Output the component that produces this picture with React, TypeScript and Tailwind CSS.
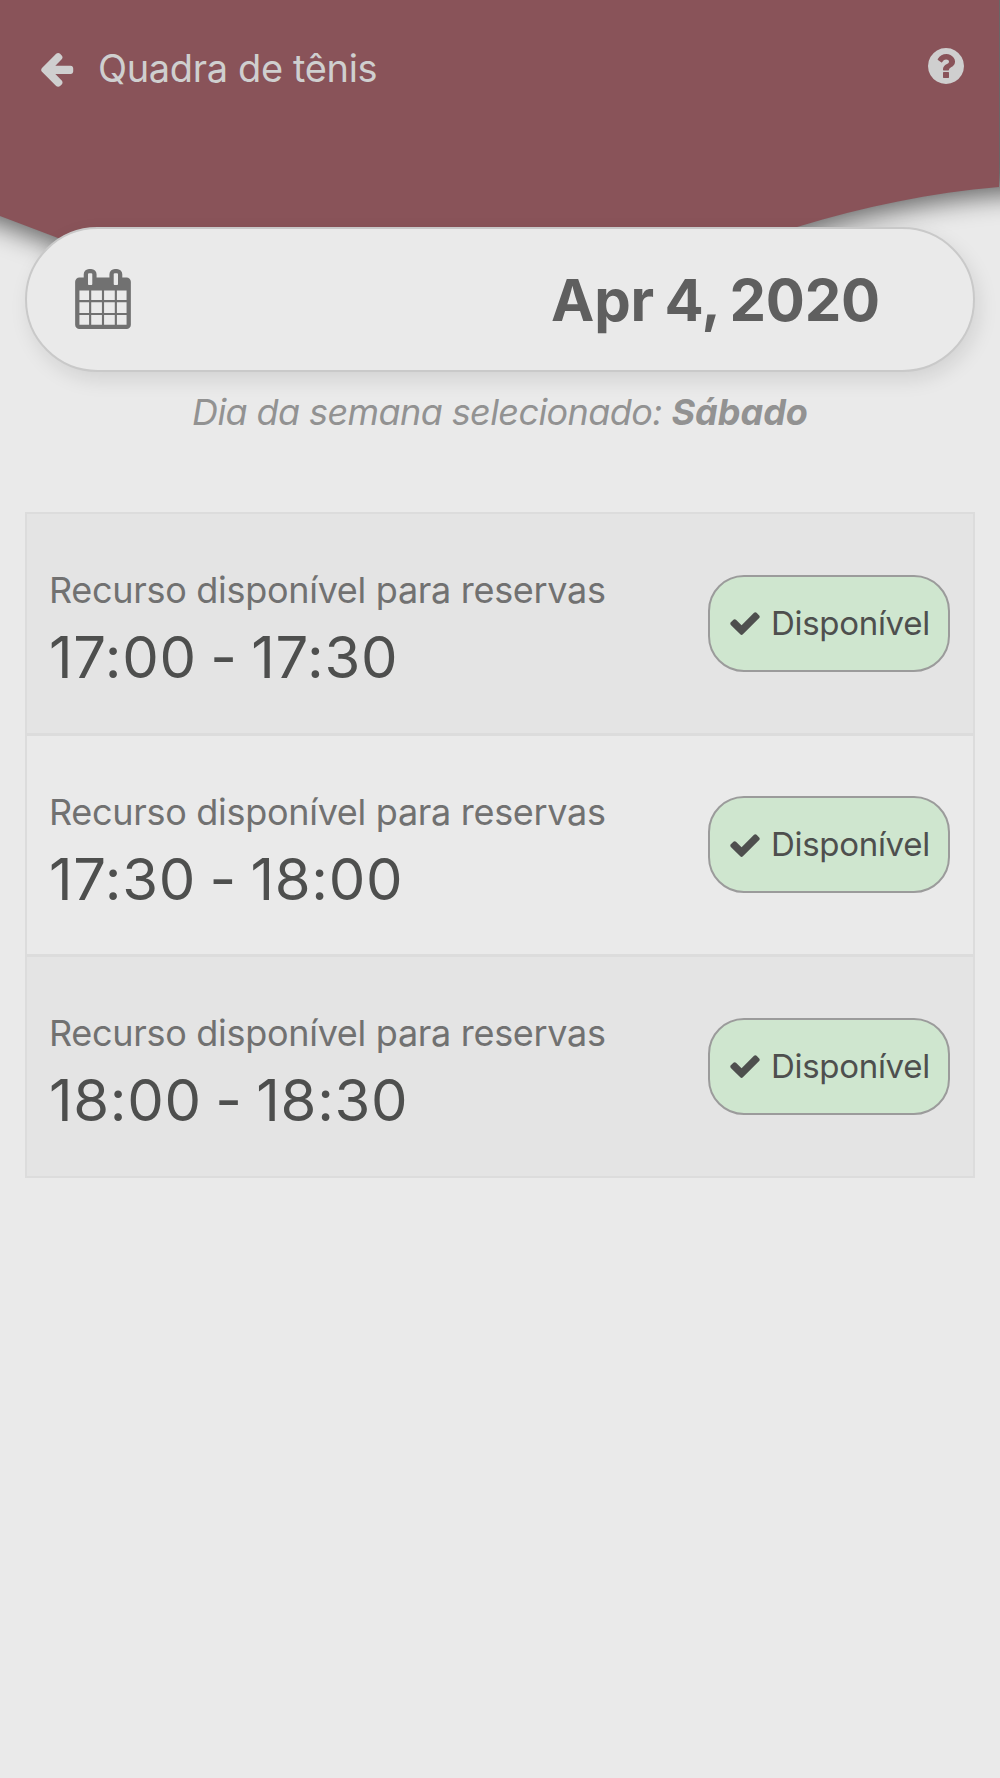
import React from "react";

const ARROW_LEFT =
  "M1664 896v128q0 53-32.5 90.5t-84.5 37.5h-704l293 294q38 36 38 90t-38 90l-75 76q-37 37-90 37-52 0-91-37l-651-652q-37-37-37-90 0-52 37-91l651-650q38-38 91-38 52 0 90 38l75 74q38 38 38 91t-38 91l-293 293h704q52 0 84.5 37.5t32.5 90.5z";
const QUESTION_CIRCLE =
  "M1024 1376v-192q0-14-9-23t-23-9h-192q-14 0-23 9t-9 23v192q0 14 9 23t23 9h192q14 0 23-9t9-23zm256-672q0-88-55.5-163t-138.5-116-170-41q-243 0-371 213-15 24 8 42l132 100q7 6 19 6 16 0 25-12 53-68 86-92 34-24 86-24 48 0 85.5 26t37.5 59q0 38-20 61t-68 45q-63 28-115.5 86.5t-52.5 125.5v36q0 14 9 23t23 9h192q14 0 23-9t9-23q0-19 21.5-49.5t54.5-49.5q32-18 49-28.5t46-35 44.5-48 28-60.5 12.5-81zm384 192q0 209-103 385.5t-279.5 279.5-385.5 103-385.5-103-279.5-279.5-103-385.5 103-385.5 279.5-279.5 385.5-103 385.5 103 279.5 279.5 103 385.5z";
const CALENDAR =
  "M192 1664h288v-288h-288v288zm352 0h320v-288h-320v288zm-352-352h288v-320h-288v320zm352 0h320v-320h-320v320zm-352-384h288v-288h-288v288zm736 736h320v-288h-320v288zm-384-736h320v-288h-320v288zm768 736h288v-288h-288v288zm-384-352h320v-320h-320v320zm-352-864v-288q0-13-9.5-22.5t-22.5-9.5h-64q-13 0-22.5 9.5t-9.5 22.5v288q0 13 9.5 22.5t22.5 9.5h64q13 0 22.5-9.5t9.5-22.5zm736 864h288v-320h-288v320zm-384-384h320v-288h-320v288zm384 0h288v-288h-288v288zm32-480v-288q0-13-9.5-22.5t-22.5-9.5h-64q-13 0-22.5 9.5t-9.5 22.5v288q0 13 9.5 22.5t22.5 9.5h64q13 0 22.5-9.5t9.5-22.5zm384-64v1280q0 52-38 90t-90 38h-1408q-52 0-90-38t-38-90v-1280q0-52 38-90t90-38h128v-96q0-66 47-113t113-47h64q66 0 113 47t47 113v96h384v-96q0-66 47-113t113-47h64q66 0 113 47t47 113v96h128q52 0 90 38t38 90z";
const CHECK =
  "M1671 566q0 40-28 68l-724 724-136 136q-28 28-68 28t-68-28l-136-136-362-362q-28-28-28-68t28-68l136-136q28-28 68-28t68 28l294 295 656-657q28-28 68-28t68 28l136 136q28 28 28 68z";

function Icon({ d, className }: { d: string; className: string }) {
  return (
    <svg viewBox="0 0 1792 1792" className={className} fill="currentColor" aria-hidden="true">
      <path d={d} />
    </svg>
  );
}

const slots = ["17:00 - 17:30", "17:30 - 18:00", "18:00 - 18:30"];

function Slot({ time }: { time: string }) {
  return (
    <li className="flex h-[221.5px] items-center justify-between border-b-[3px] border-[#dcdcdc] pl-[22px] pr-[23px] odd:bg-[#e4e4e4] last:h-[218.5px] last:border-b-0">
      <div className="flex flex-col pt-3">
        <span className="text-[36px] leading-[44px] tracking-[-0.3px] text-[#717171]">
          Recurso disponível para reservas
        </span>
        <span className="mt-3 text-[58px] leading-[66px] tracking-[0.7px] text-[#4e4f4e] [word-spacing:-3.5px]">
          {time}
        </span>
      </div>
      <button className="flex h-[97px] w-[242px] items-center gap-[9px] rounded-[36px] border-2 border-[#9b9b9b] bg-[#cfe6cf] pl-[18px] text-[33px] tracking-[-0.3px] text-[#4e4f4e]">
        <Icon d={CHECK} className="size-[34px] shrink-0" />
        <span>Disponível</span>
      </button>
    </li>
  );
}

export default function App() {
  return (
    <div className="relative isolate h-[1778px] w-[1000px] overflow-hidden bg-[#eaeaea] font-['Inter',sans-serif]">
      <svg
        className="absolute left-0 top-0 -z-10 h-[300px] w-[1000px]"
        viewBox="0 0 1000 300"
        aria-hidden="true"
      >
        <path
          className="blur-[13px]"
          d="M-60 -60H1060V191L999 195C930 201 866 214 797 235C600 298 330 348 58 246L0 224L-60 202Z"
          fill="#000"
          fillOpacity="0.56"
        />
        <path
          d="M0 0H999V187C930 193 866 206 797 227C600 290 330 340 58 238L0 216Z"
          fill="#895359"
        />
      </svg>

      <header className="flex h-[227px] items-start justify-between pl-[37px] pr-[33px] pt-[45px] text-[#cfcfcf]">
        <div className="flex items-center">
          <Icon d={ARROW_LEFT} className="size-[39px]" />
          <h1 className="ml-[22px] text-[38px] leading-[46px] tracking-[-0.35px]">Quadra de tênis</h1>
        </div>
        <Icon d={QUESTION_CIRCLE} className="size-[42px]" />
      </header>

      <main className="px-[25px]">
        <div className="flex h-[145px] items-center justify-between rounded-full border-2 border-[#c9c9c9] bg-[#eaeaea] pl-[46px] pr-[93px] shadow-[4px_8px_20px_rgba(0,0,0,0.1)]">
          <Icon d={CALENDAR} className="mb-0.5 size-[60px] text-[#717171]" />
          <span className="pt-0.5 text-[58px] font-bold tracking-[-0.2px] text-[#5f5f5f] [word-spacing:-3px]">
            Apr 4, 2020
          </span>
        </div>
        <p className="mt-[18px] text-center text-[36px] italic leading-[44px] tracking-[-0.6px] text-[#929292]">
          Dia da semana selecionado: <strong className="font-bold tracking-normal">Sábado</strong>
        </p>
        <ul className="mt-[78px] border-2 border-[#dcdcdc]">
          {slots.map((time) => (
            <Slot key={time} time={time} />
          ))}
        </ul>
      </main>
    </div>
  );
}
